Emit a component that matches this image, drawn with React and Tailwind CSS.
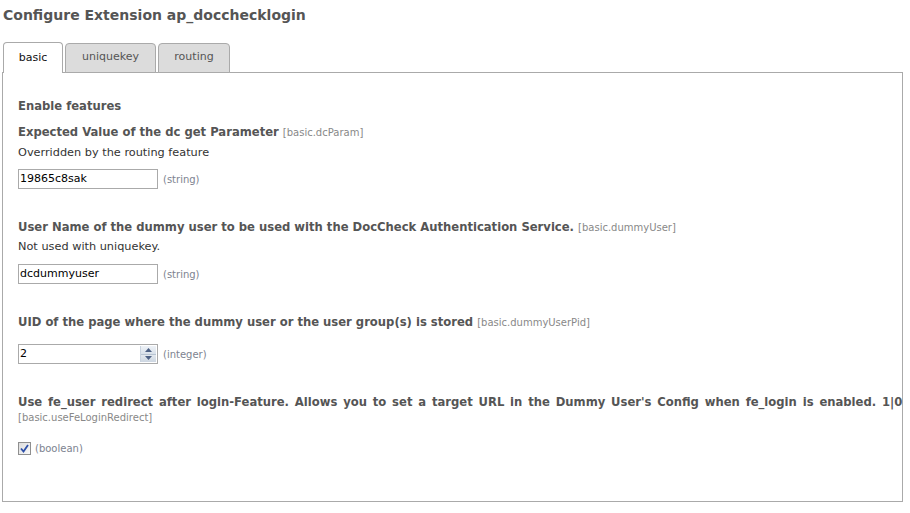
import React from "react";

const font = { fontFamily: '"DejaVu Sans", Verdana, sans-serif' };

function Spinner() {
  return (
    <div className="absolute right-[1px] top-[1px] bottom-[1px] w-[16px] flex flex-col border-l border-[#c9d3df]">
      <div className="flex-1 flex items-center justify-center bg-gradient-to-b from-[#eef2f7] to-[#d9e1ea] border-b border-[#b8c4d2]">
        <svg width="7" height="4" viewBox="0 0 7 4"><path d="M0 4 L3.5 0 L7 4 Z" fill="#4d6185" /></svg>
      </div>
      <div className="flex-1 flex items-center justify-center bg-gradient-to-b from-[#e4e9ef] to-[#ccd6e1]">
        <svg width="7" height="4" viewBox="0 0 7 4"><path d="M0 0 L3.5 4 L7 0 Z" fill="#4d6185" /></svg>
      </div>
    </div>
  );
}

function Label({ children, tag }) {
  return (
    <div className="h-[16px] leading-[16px] text-[11.6px] font-bold text-[#555] whitespace-nowrap">
      {children} <span className="font-normal text-[10px] text-[#888]">{tag}</span>
    </div>
  );
}

export default function App() {
  return (
    <div className="w-[910px] h-[513px] bg-white text-[#333]" style={font}>
      <div className="pl-[3px] pt-[7px] h-[42px] text-[14px] font-bold text-[#555] leading-[16px]">
        Configure Extension ap_docchecklogin
      </div>
      <div className="flex items-end pl-[3px] gap-[2px] h-[30px] relative z-10">
        <div className="h-[31px] w-[60px] -mb-px border border-b-0 border-[#aaa] rounded-t-[4px] bg-white flex items-center justify-center text-[11px] text-[#111] pt-[1px]">
          basic
        </div>
        <div className="h-[30px] w-[91px] -mb-px border border-[#aaa] rounded-t-[4px] bg-[#dcdcdc] flex items-center justify-center text-[11px] text-[#555] pb-[2px]">
          uniquekey
        </div>
        <div className="h-[30px] w-[72px] -mb-px border border-[#aaa] rounded-t-[4px] bg-[#dcdcdc] flex items-center justify-center text-[11px] text-[#555] pb-[2px]">
          routing
        </div>
      </div>
      <div className="ml-[2px] w-[901px] h-[430px] border border-[#aaa] bg-white pl-[15px] pt-[25px]">
        <div className="h-[16px] leading-[16px] text-[11.6px] font-bold text-[#555]">Enable features</div>

        <div className="mt-[10px]">
          <Label tag="[basic.dcParam]">Expected Value of the dc get Parameter</Label>
          <div className="mt-[5px] h-[16px] leading-[16px] text-[11.3px] text-[#333]">Overridden by the routing feature</div>
          <div className="mt-[8px] flex items-center gap-[5px]">
            <div className="w-[140px] h-[20px] border border-[#aaa] bg-white px-[1px] text-[11px] leading-[18px] text-black">19865c8sak</div>
            <span className="text-[10px] text-[#7d8390]">(string)</span>
          </div>
        </div>

        <div className="mt-[30px]">
          <Label tag="[basic.dummyUser]">User Name of the dummy user to be used with the DocCheck Authentication Service.</Label>
          <div className="mt-[4px] h-[16px] leading-[16px] text-[11.3px] text-[#333]">Not used with uniquekey.</div>
          <div className="mt-[9px] flex items-center gap-[5px]">
            <div className="w-[140px] h-[20px] border border-[#aaa] bg-white px-[1px] text-[11px] leading-[18px] text-black">dcdummyuser</div>
            <span className="text-[10px] text-[#7d8390]">(string)</span>
          </div>
        </div>

        <div className="mt-[30px]">
          <Label tag="[basic.dummyUserPid]">UID of the page where the dummy user or the user group(s) is stored</Label>
          <div className="mt-[14px] flex items-center gap-[5px]">
            <div className="relative w-[140px] h-[20px] border border-[#aaa] bg-white px-[1px] text-[11px] leading-[18px] text-black">
              2
              <Spinner />
            </div>
            <span className="text-[10px] text-[#7d8390]">(integer)</span>
          </div>
        </div>

        <div className="mt-[30px]">
          <div className="h-[16px] leading-[16px] text-[11.6px] font-bold text-[#555] whitespace-nowrap [word-spacing:1.8px]">
            Use fe_user redirect after login-Feature. Allows you to set a target URL in the Dummy User's Config when fe_login is enabled. 1|0
          </div>
          <div className="h-[16px] leading-[16px] text-[10px] text-[#888]">[basic.useFeLoginRedirect]</div>
          <div className="mt-[15px] flex items-center gap-[4px]">
            <div className="w-[13px] h-[13px] border border-[#8f8f8f] bg-gradient-to-br from-[#dcdcdc] to-[#fafafa] flex items-center justify-center">
              <svg width="9" height="9" viewBox="0 0 9 9"><path d="M1 4.5 L3.5 7.5 L8 1" stroke="#2d4fa8" strokeWidth="1.8" fill="none" /></svg>
            </div>
            <span className="text-[10px] text-[#7d8390]">(boolean)</span>
          </div>
        </div>
      </div>
    </div>
  );
}
